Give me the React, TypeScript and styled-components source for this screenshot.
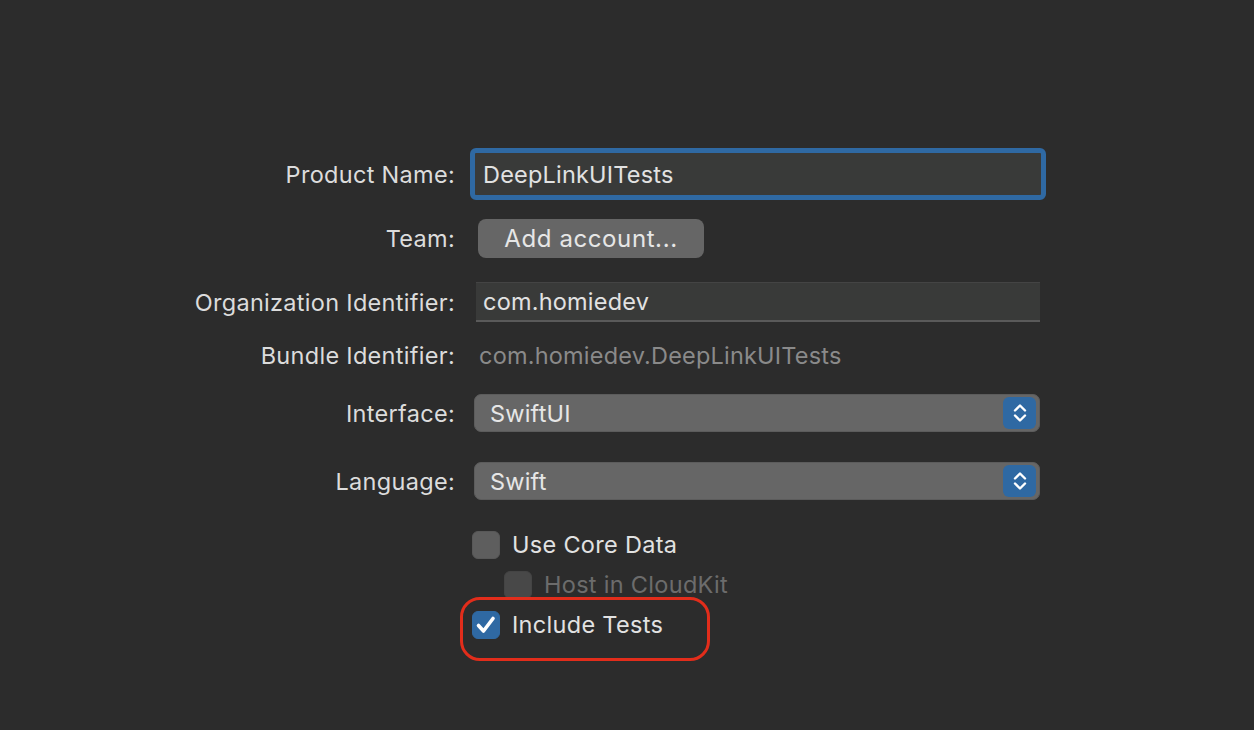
import React from 'react';
import styled, { createGlobalStyle } from 'styled-components';

const GlobalStyle = createGlobalStyle`
	html, body {
		margin: 0;
		padding: 0;
		background: #2c2c2c;
	}
	body {
		font-family: Inter, 'Noto Sans', 'Liberation Sans', sans-serif;
		-webkit-font-smoothing: antialiased;
	}
`;

const Page = styled.div`
	width: 1254px;
	height: 730px;
	background: #2c2c2c;
	box-sizing: border-box;
	padding-top: 148px;
	overflow: hidden;
`;

const Form = styled.div`
	display: flex;
	flex-direction: column;
`;

const Row = styled.div<{ $h: number; $mt?: number }>`
	display: grid;
	grid-template-columns: 455px 1fr;
	column-gap: 15px;
	align-items: center;
	height: ${(p) => p.$h}px;
	margin-top: ${(p) => p.$mt || 0}px;
`;

const Label = styled.div`
	text-align: right;
	font-size: 23.5px;
	color: #dcdcdc;
	letter-spacing: 0.3px;
	white-space: nowrap;
`;

const Cell = styled.div<{ $indent?: number }>`
	display: flex;
	align-items: center;
	padding-left: ${(p) => p.$indent || 0}px;
	position: relative;
	height: 100%;
`;

const FocusField = styled.div`
	width: 576px;
	height: 52px;
	box-sizing: border-box;
	border: 5px solid #2f69a3;
	border-radius: 6px;
	background: #393a39;
	display: flex;
	align-items: center;
	padding-left: 8px;
	font-size: 23.5px;
	letter-spacing: 0.2px;
	color: #e2e2e2;
`;

const TextField = styled.div`
	width: 564px;
	height: 40px;
	box-sizing: border-box;
	background: #393a39;
	border-top: 1px solid #444;
	border-bottom: 2px solid #5a5a5a;
	display: flex;
	align-items: center;
	padding-left: 7px;
	font-size: 23.5px;
	letter-spacing: 0.2px;
	color: #e2e2e2;
`;

const Button = styled.div`
	width: 226px;
	height: 39px;
	box-sizing: border-box;
	background: #666666;
	border-radius: 8px;
	display: flex;
	align-items: center;
	justify-content: center;
	font-size: 24px;
	letter-spacing: 0.6px;
	color: #e6e6e6;
`;

const Value = styled.div`
	font-size: 23.5px;
	letter-spacing: 0.2px;
	color: #8a8a8a;
`;

const Popup = styled.div`
	width: 566px;
	height: 38px;
	box-sizing: border-box;
	background: #666666;
	border: 1px solid #5c5c5c;
	border-radius: 7px;
	display: flex;
	align-items: center;
	justify-content: space-between;
	padding-left: 15px;
	padding-right: 3px;
	font-size: 23.5px;
	letter-spacing: 0.2px;
	color: #e6e6e6;
`;

const Stepper = styled.div`
	width: 33px;
	height: 32px;
	border-radius: 6px;
	background: #2f69a3;
	display: flex;
	align-items: center;
	justify-content: center;
`;

const CheckRow = styled.div<{ $disabled?: boolean }>`
	display: flex;
	align-items: center;
	gap: 12px;
	font-size: 23.5px;
	letter-spacing: 0.3px;
	color: ${(p) => (p.$disabled ? '#6c6c6c' : '#e2e2e2')};
`;

const Box = styled.div<{ $tone: 'off' | 'disabled' | 'on' }>`
	width: 28px;
	height: 28px;
	box-sizing: border-box;
	border-radius: 6px;
	background: ${(p) => (p.$tone === 'on' ? '#2f69a3' : p.$tone === 'disabled' ? '#484848' : '#5e5e5e')};
	border: 1px solid ${(p) => (p.$tone === 'on' ? '#2f69a3' : p.$tone === 'disabled' ? '#444' : '#585858')};
	display: flex;
	align-items: center;
	justify-content: center;
`;

const Highlight = styled.div`
	position: absolute;
	left: -10px;
	top: -13px;
	width: 250px;
	height: 64px;
	box-sizing: border-box;
	border: 3px solid #e22d1b;
	border-radius: 20px;
	pointer-events: none;
`;

const Chevrons = () => (
	<svg width='16' height='24' viewBox='0 0 16 24' fill='none'>
		<path d='M3 9.5 L8 4.5 L13 9.5' stroke='#fff' strokeWidth='2.4' strokeLinecap='round' strokeLinejoin='round' />
		<path d='M3 14.5 L8 19.5 L13 14.5' stroke='#fff' strokeWidth='2.4' strokeLinecap='round' strokeLinejoin='round' />
	</svg>
);

const Check = () => (
	<svg width='24' height='24' viewBox='0 0 24 24' fill='none'>
		<path d='M4.5 12.5 L9.5 18 L19 5.5' stroke='#fff' strokeWidth='3.6' strokeLinecap='round' strokeLinejoin='round' />
	</svg>
);

const App = () => {
	return (
		<Page>
			<GlobalStyle />
			<Form>
				<Row $h={52}>
					<Label>Product Name:</Label>
					<Cell>
						<FocusField>DeepLinkUITests</FocusField>
					</Cell>
				</Row>
				<Row $h={40} $mt={18}>
					<Label>Team:</Label>
					<Cell $indent={8}>
						<Button>Add account...</Button>
					</Cell>
				</Row>
				<Row $h={40} $mt={24}>
					<Label>Organization Identifier:</Label>
					<Cell $indent={6}>
						<TextField>com.homiedev</TextField>
					</Cell>
				</Row>
				<Row $h={30} $mt={18}>
					<Label>Bundle Identifier:</Label>
					<Cell $indent={9}>
						<Value>com.homiedev.DeepLinkUITests</Value>
					</Cell>
				</Row>
				<Row $h={38} $mt={24}>
					<Label>Interface:</Label>
					<Cell $indent={4}>
						<Popup>
							SwiftUI
							<Stepper>
								<Chevrons />
							</Stepper>
						</Popup>
					</Cell>
				</Row>
				<Row $h={38} $mt={30}>
					<Label>Language:</Label>
					<Cell $indent={4}>
						<Popup>
							Swift
							<Stepper>
								<Chevrons />
							</Stepper>
						</Popup>
					</Cell>
				</Row>
				<Row $h={28} $mt={30}>
					<span />
					<Cell $indent={2}>
						<CheckRow>
							<Box $tone='off' />
							Use Core Data
						</CheckRow>
					</Cell>
				</Row>
				<Row $h={28} $mt={12}>
					<span />
					<Cell $indent={34}>
						<CheckRow $disabled>
							<Box $tone='disabled' />
							Host in CloudKit
						</CheckRow>
					</Cell>
				</Row>
				<Row $h={28} $mt={12}>
					<span />
					<Cell $indent={2}>
						<Highlight />
						<CheckRow>
							<Box $tone='on'>
								<Check />
							</Box>
							Include Tests
						</CheckRow>
					</Cell>
				</Row>
			</Form>
		</Page>
	);
};

export default App;
